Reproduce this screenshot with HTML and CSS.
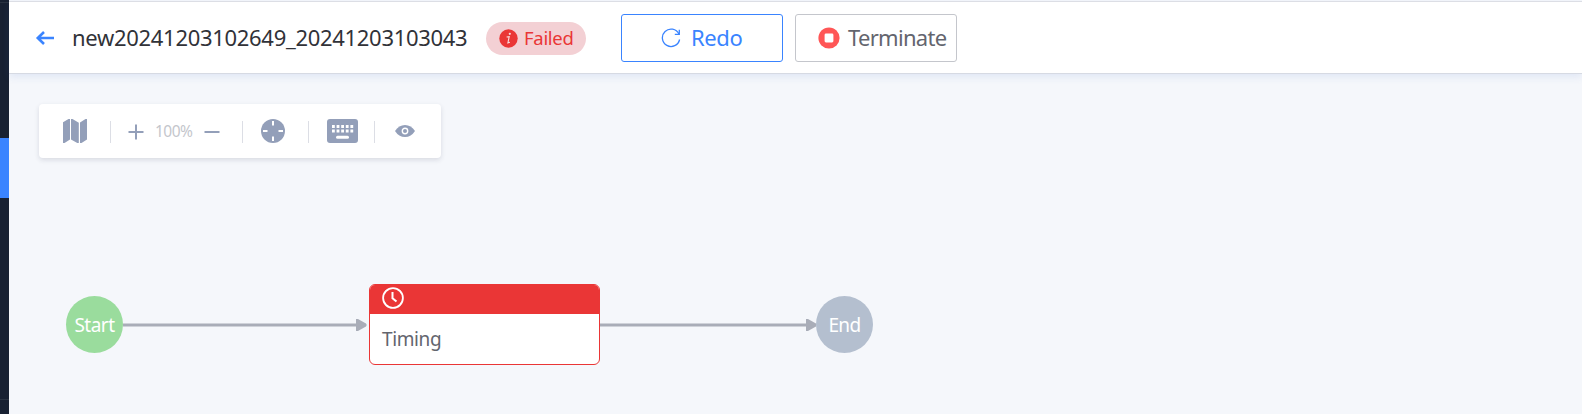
FILE: index.html
```html
<!DOCTYPE html>
<html lang="en">
<head>
<meta charset="utf-8">
<title>Task execution</title>
<link rel="stylesheet" href="styles.css">
</head>
<body>
<div class="app">
  <nav class="sidebar"><span class="rule top"></span><span class="active"></span><span class="rule bottom"></span></nav>
  <div class="main">
    <header class="header">
      <svg class="back" width="20" height="16" viewBox="0 0 20 16"><path d="M9 2 2.8 8 9 14M2.8 8H19" fill="none" stroke="#3a84ff" stroke-width="2.6"/></svg>
      <h1 class="title">new20241203102649_20241203103043</h1>
      <span class="status">
        <svg width="19" height="19" viewBox="0 0 19 19"><circle cx="9.5" cy="9.5" r="9.2" fill="#ea3636"/><circle cx="10.8" cy="4.8" r="1.1" fill="#f7dcde"/><path d="M7.6 8 10.2 7.6 8.9 13.9 10.9 13.3" fill="none" stroke="#f7dcde" stroke-width="1.1"/></svg>
        <span class="status-text">Failed</span>
      </span>
      <button class="btn redo">
        <svg width="20" height="20" viewBox="0 0 20 20" fill="none" stroke="#3a84ff" stroke-width="1.3"><path d="M17.9 6A8.7 8.7 0 1 0 18.6 11.5"/><path d="M18.3 1.8V6.3H13.8"/></svg>
        <span class="redo-text">Redo</span>
      </button>
      <button class="btn terminate">
        <svg width="22" height="22" viewBox="0 0 22 22"><circle cx="11" cy="11" r="10.6" fill="#ff5656"/><rect x="6.6" y="6.6" width="8.8" height="8.8" rx="1.4" fill="#fff"/></svg>
        <span class="terminate-text">Terminate</span>
      </button>
    </header>
    <main class="canvas">
      <div class="toolbar">
        <svg class="map" width="26" height="26" viewBox="0 0 26 26" fill="#939fb9"><path d="M1 4.3 6.5 1H8V21.5L2.5 25H1ZM9 1H10.5L16.8 4.7V25H15.3L9 21.5ZM18 4.5 23.5 1H25V21.5L19.5 25H18Z"/></svg>
        <i class="sep"></i>
        <svg class="plus" width="16" height="16" viewBox="0 0 16 16" stroke="#939fb9" stroke-width="2"><path d="M.5 8h15M8 .5v15"/></svg>
        <span class="zoom">100%</span>
        <svg class="minus" width="16" height="16" viewBox="0 0 16 16" stroke="#939fb9" stroke-width="2"><path d="M.5 8h15"/></svg>
        <i class="sep s2"></i>
        <svg class="target" width="24" height="24" viewBox="0 0 24 24"><circle cx="12" cy="12" r="12" fill="#939fb9"/><path d="M12 2v4.5M12 17.5V22M2 12h4.5M17.5 12H22" stroke="#fff" stroke-width="2"/></svg>
        <i class="sep s3"></i>
        <svg class="keyboard" width="31" height="24" viewBox="0 0 31 24"><rect width="31" height="24" rx="3" fill="#939fb9"/><path d="M5 7.5h21.5M5 12h21.5" stroke="#fff" stroke-width="2.8" stroke-dasharray="2.8 1.8"/><path d="M10.5 18.3h10" stroke="#fff" stroke-width="3" stroke-linecap="round"/></svg>
        <i class="sep s4"></i>
        <svg class="eye" width="20" height="12" viewBox="0 0 20 12"><path d="M0 6Q3.8 0 10 0T20 6Q16.2 12 10 12T0 6Z" fill="#939fb9"/><circle cx="10" cy="6" r="2.7" fill="#939fb9" stroke="#fff" stroke-width="1.4"/></svg>
      </div>
      <div class="flow">
        <div class="node start"><span>Start</span></div>
        <svg class="link" width="246" height="14" viewBox="0 0 246 14"><path d="M0 7h236" stroke="#a9adb8" stroke-width="3"/><path d="M233 1h2l8 4.5q1.5 1.5 0 3L235 13h-2Z" fill="#a9adb8"/></svg>
        <div class="task">
          <div class="task-head"><svg width="22" height="22" viewBox="0 0 22 22" fill="none" stroke="#fff" stroke-width="1.8"><circle cx="11" cy="11" r="9.9"/><path d="M10.5 5v6.2l4 3.3" stroke-width="2"/></svg></div>
          <div class="task-body"><span>Timing</span></div>
        </div>
        <svg class="link" width="216" height="14" viewBox="0 0 216 14"><path d="M0 7h208" stroke="#a9adb8" stroke-width="3"/><path d="M206 1h2l8 4.5v3L208 13h-2Z" fill="#a9adb8"/></svg>
        <div class="node end"><span>End</span></div>
      </div>
    </main>
  </div>
</div>
</body>
</html>
```
FILE: styles.css
```css
* { box-sizing: border-box; }
body { margin: 0; font-family: "Noto Sans", "Open Sans", sans-serif; background: #f5f7fb; overflow: hidden; }
svg { display: block; flex: none; }
.app { display: flex; width: 1582px; height: 414px; }
.sidebar { width: 9px; flex: none; background: #182132; display: flex; flex-direction: column; }
.rule { height: 1px; background: #2a3342; }
.rule.top { margin-top: 2px; }
.active { height: 60px; margin-top: 135px; background: #3a84ff; }
.rule.bottom { margin-top: 201px; }
.main { flex: 1; display: flex; flex-direction: column; }
.header { height: 73px; margin-top: 1px; border-top: 1px solid #dcdee5; border-bottom: 1px solid #d6dae3; background: #fff; box-shadow: 0 3px 8px rgba(58, 100, 190, .11); display: flex; align-items: flex-start; }
.back { margin: 28px 0 0 26px; }
.title { margin: 19px 0 0 17px; width: 395px; font-size: 22px; line-height: 32px; font-weight: 400; letter-spacing: -.3px; color: #313238; white-space: nowrap; }
.status { margin: 20px 0 0 19px; width: 100px; height: 33px; border-radius: 17px; background: #f3d0d4; color: #ea3636; font-size: 18.5px; line-height: 31px; display: flex; align-items: center; padding-left: 13px; gap: 6px; }
.status-text { letter-spacing: -.3px; margin-top: -2px; }
.btn { height: 48px; width: 162px; margin-top: 12px; background: #fff; border-radius: 3px; padding: 0; display: flex; align-items: center; font: 22px/32px "Noto Sans", "Open Sans", sans-serif; }
.redo { margin-left: 35px; border: 1px solid #3a84ff; color: #3a84ff; padding-left: 39px; gap: 10px; }
.redo-text { letter-spacing: -.4px; margin-top: -2px; }
.terminate { margin-left: 12px; border: 1px solid #c4c6cc; color: #63656e; padding-left: 22px; gap: 8px; }
.terminate-text { letter-spacing: -.7px; margin-top: -2px; }
.canvas { flex: 1; display: flex; flex-direction: column; align-items: flex-start; padding: 30px 0 0 30px; }
.toolbar { width: 402px; height: 54px; border-radius: 4px; background: #fff; box-shadow: 0 2px 5px rgba(40, 50, 75, .14); display: flex; align-items: center; }
.map { margin-left: 23px; }
.sep { width: 1px; height: 22px; background: #dcdee5; margin-left: 22px; margin-top: 2px; }
.plus { margin-left: 17px; margin-top: 2px; }
.zoom { width: 38px; margin-left: 11px; font-size: 15.5px; line-height: 20px; letter-spacing: -.5px; color: #c4c6cc; margin-top: 0; }
.minus { margin-left: 11px; margin-top: 2px; }
.s2 { margin-left: 22px; }
.target { margin-left: 18px; }
.s3 { margin-left: 23px; }
.keyboard { margin-left: 18px; }
.s4 { margin-left: 16px; }
.eye { margin-left: 20px; }
.flow { display: flex; align-items: center; margin: 126px 0 0 27px; }
.node { width: 57px; height: 57px; border-radius: 50%; color: #fff; display: flex; align-items: center; justify-content: center; font-size: 19px; line-height: 26px; flex: none; }
.start { background: #9adc9d; letter-spacing: -.5px; }
.end { background: #b4bfcf; letter-spacing: -.6px; }
.task { width: 231px; height: 81px; border: 1px solid #ea3636; border-radius: 6px; background: #fff; overflow: hidden; flex: none; }
.task-head { height: 29px; background: #ea3636; padding: 2px 0 0 12px; }
.task-body { padding: 12px 0 0 12px; font-size: 19px; line-height: 26px; letter-spacing: -.4px; color: #63656e; }
```
